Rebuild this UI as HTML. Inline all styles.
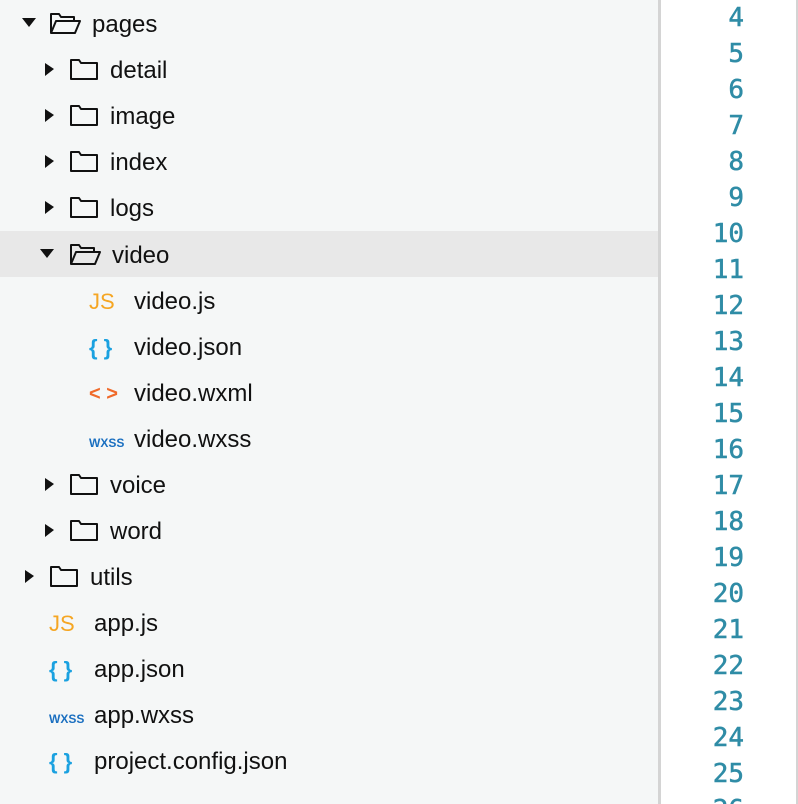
<!DOCTYPE html>
<html><head><meta charset="utf-8"><style>
html,body{margin:0;padding:0;width:798px;height:804px;overflow:hidden;background:#f5f7f7;font-family:"Liberation Sans",Helvetica,Arial,sans-serif;position:relative}
.tree{position:absolute;left:0;top:0;width:658px;height:804px;background:#f5f7f7;overflow:hidden}
.row{position:absolute;left:0;width:658px;height:46px;font-size:24px;color:#111}
.row.sel{background:#e8e8e8}
.row span.t{position:absolute;top:12px;line-height:26px}
.tri{position:absolute;top:0}
.ic{position:absolute}
.divider{position:absolute;left:658px;top:0;width:3px;height:804px;background:#d4d4d4}
.gut{position:absolute;left:661px;top:0;width:135px;height:804px;background:#fff;overflow:hidden}
.rdiv{position:absolute;left:796px;top:0;width:2px;height:804px;background:#d4d4d4}
.ln{position:absolute;right:52px;width:100px;text-align:right;font-family:"DejaVu Sans Mono",monospace;font-size:26px;color:#2f8ca6;line-height:36px;-webkit-text-stroke:0.5px #2f8ca6}
</style></head><body>
<div class="tree">
<div class="row" style="top:0">
<svg class="tri" style="left:20px" width="20" height="46"><path d="M2 18 L16 18 L9 27 Z" fill="#111"/></svg>
<svg class="ic" style="left:48px;top:10px" width="34" height="26"><path d="M3 23 L3 4 L11 4 L13 7 L26 7 L26 11 M3 23 L8 11 L32 11 L27 23 Z" fill="none" stroke="#111" stroke-width="2" stroke-linejoin="round"/></svg>
<span class="t" style="left:92px">pages</span></div>
<div class="row" style="top:46px"><svg class="tri" style="left:40px" width="20" height="46"><path d="M5 17 L14 23 L5 30 Z" fill="#111"/></svg><svg class="ic" style="left:68px;top:10px" width="34" height="26"><path d="M3 23 L3 4 L11 4 L13 7 L29 7 L29 23 Z" fill="none" stroke="#111" stroke-width="2" stroke-linejoin="round"/></svg><span class="t" style="left:110px">detail</span></div>
<div class="row" style="top:92px"><svg class="tri" style="left:40px" width="20" height="46"><path d="M5 17 L14 23 L5 30 Z" fill="#111"/></svg><svg class="ic" style="left:68px;top:10px" width="34" height="26"><path d="M3 23 L3 4 L11 4 L13 7 L29 7 L29 23 Z" fill="none" stroke="#111" stroke-width="2" stroke-linejoin="round"/></svg><span class="t" style="left:110px">image</span></div>
<div class="row" style="top:138px"><svg class="tri" style="left:40px" width="20" height="46"><path d="M5 17 L14 23 L5 30 Z" fill="#111"/></svg><svg class="ic" style="left:68px;top:10px" width="34" height="26"><path d="M3 23 L3 4 L11 4 L13 7 L29 7 L29 23 Z" fill="none" stroke="#111" stroke-width="2" stroke-linejoin="round"/></svg><span class="t" style="left:110px">index</span></div>
<div class="row" style="top:184px"><svg class="tri" style="left:40px" width="20" height="46"><path d="M5 17 L14 23 L5 30 Z" fill="#111"/></svg><svg class="ic" style="left:68px;top:10px" width="34" height="26"><path d="M3 23 L3 4 L11 4 L13 7 L29 7 L29 23 Z" fill="none" stroke="#111" stroke-width="2" stroke-linejoin="round"/></svg><span class="t" style="left:110px">logs</span></div>
<div class="row sel" style="top:231px"><svg class="tri" style="left:38px" width="20" height="46"><path d="M2 18 L16 18 L9 27 Z" fill="#111"/></svg><svg class="ic" style="left:68px;top:10px" width="34" height="26"><path d="M3 23 L3 4 L11 4 L13 7 L26 7 L26 11 M3 23 L8 11 L32 11 L27 23 Z" fill="none" stroke="#111" stroke-width="2" stroke-linejoin="round"/></svg><span class="t" style="left:112px">video</span></div>
<div class="row" style="top:277px"><span class="t" style="left:89px;color:#f5a623;font-size:22px">JS</span><span class="t" style="left:134px">video.js</span></div>
<div class="row" style="top:323px"><span class="t" style="left:89px;color:#1aa1e0;font-size:22px;font-weight:bold">{ }</span><span class="t" style="left:134px">video.json</span></div>
<div class="row" style="top:369px"><span class="t" style="left:89px;color:#f06a2a;font-size:20px;font-weight:bold">&lt; &gt;</span><span class="t" style="left:134px">video.wxml</span></div>
<div class="row" style="top:415px"><span class="t" style="left:89px;color:#1a6fc0;font-size:12px;font-weight:bold;top:15px">WXSS</span><span class="t" style="left:134px">video.wxss</span></div>
<div class="row" style="top:461px"><svg class="tri" style="left:40px" width="20" height="46"><path d="M5 17 L14 23 L5 30 Z" fill="#111"/></svg><svg class="ic" style="left:68px;top:10px" width="34" height="26"><path d="M3 23 L3 4 L11 4 L13 7 L29 7 L29 23 Z" fill="none" stroke="#111" stroke-width="2" stroke-linejoin="round"/></svg><span class="t" style="left:110px">voice</span></div>
<div class="row" style="top:507px"><svg class="tri" style="left:40px" width="20" height="46"><path d="M5 17 L14 23 L5 30 Z" fill="#111"/></svg><svg class="ic" style="left:68px;top:10px" width="34" height="26"><path d="M3 23 L3 4 L11 4 L13 7 L29 7 L29 23 Z" fill="none" stroke="#111" stroke-width="2" stroke-linejoin="round"/></svg><span class="t" style="left:110px">word</span></div>
<div class="row" style="top:553px"><svg class="tri" style="left:20px" width="20" height="46"><path d="M5 17 L14 23 L5 30 Z" fill="#111"/></svg><svg class="ic" style="left:48px;top:10px" width="34" height="26"><path d="M3 23 L3 4 L11 4 L13 7 L29 7 L29 23 Z" fill="none" stroke="#111" stroke-width="2" stroke-linejoin="round"/></svg><span class="t" style="left:90px">utils</span></div>
<div class="row" style="top:599px"><span class="t" style="left:49px;color:#f5a623;font-size:22px">JS</span><span class="t" style="left:94px">app.js</span></div>
<div class="row" style="top:645px"><span class="t" style="left:49px;color:#1aa1e0;font-size:22px;font-weight:bold">{ }</span><span class="t" style="left:94px">app.json</span></div>
<div class="row" style="top:691px"><span class="t" style="left:49px;color:#1a6fc0;font-size:12px;font-weight:bold;top:15px">WXSS</span><span class="t" style="left:94px">app.wxss</span></div>
<div class="row" style="top:737px"><span class="t" style="left:49px;color:#1aa1e0;font-size:22px;font-weight:bold">{ }</span><span class="t" style="left:94px">project.config.json</span></div>
</div>
<div class="divider"></div>
<div class="gut">
<div class="ln" style="top:0px">4<br>5<br>6<br>7<br>8<br>9<br>10<br>11<br>12<br>13<br>14<br>15<br>16<br>17<br>18<br>19<br>20<br>21<br>22<br>23<br>24<br>25<br>26</div>
</div>
<div class="rdiv"></div>
</body></html>
